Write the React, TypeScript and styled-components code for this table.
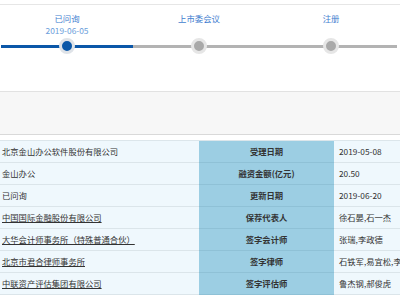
import React from "react";
import styled, { createGlobalStyle } from "styled-components";

const Global = createGlobalStyle`
  html, body { margin: 0; padding: 0; background: #ffffff; }
  body { font-family: "Noto Sans CJK SC", "Liberation Sans", sans-serif; overflow: hidden; }
`;

const Page = styled.div`
  width: 400px;
  height: 300px;
  overflow: hidden;
  background: #ffffff;
`;

const TopRule = styled.div`
  height: 4px;
  border-bottom: 1px solid #e6e6e6;
`;

const Steps = styled.div`
  display: flex;
  padding-left: 1px;
`;

const Step = styled.div`
  flex: 0 0 132px;
  display: flex;
  flex-direction: column;
  align-items: center;
`;

const StepLabel = styled.div`
  margin-top: 7px;
  height: 12px;
  line-height: 12px;
  font-size: 8.4px;
  color: #3f7ecf;
`;

const StepDate = styled.div`
  height: 12px;
  line-height: 12px;
  font-size: 8.4px;
  color: #6b9edb;
`;

const Track = styled.div<{ $done: boolean }>`
  align-self: stretch;
  margin-top: 2px;
  height: 16px;
  display: flex;
  align-items: center;
  justify-content: center;
  background: linear-gradient(${(p) => (p.$done ? "#0b57a8" : "#b3b3b3")}, ${(p) => (p.$done ? "#0b57a8" : "#b3b3b3")}) center / 100% 3px no-repeat;
`;

const Dot = styled.div<{ $done: boolean }>`
  width: 10px;
  height: 10px;
  border-radius: 50%;
  background: ${(p) => (p.$done ? "#0b57a8" : "#a9a9a9")};
  border: 3px solid ${(p) => (p.$done ? "#dfe3e8" : "#e6e6e6")};
`;

const Band = styled.div`
  margin-top: 37px;
  height: 42px;
  background: #f7f7f7;
  border-top: 1px solid #e2e2e2;
  border-bottom: 1px solid #d9d9d9;
`;

const Table = styled.div`
  margin-top: 5px;
  display: grid;
  grid-template-columns: 199px 135px 1fr;
  border-top: 1px solid #dce6eb;
`;

const Cell = styled.div<{ $kind: "value" | "label" | "data" }>`
  height: 21px;
  line-height: 21px;
  font-size: 8.3px;
  white-space: nowrap;
  overflow: hidden;
  color: #333333;
  border-bottom: 1px solid ${(p) => (p.$kind === "label" ? "#8fc1d6" : "#dbe5ea")};
  background: ${(p) => (p.$kind === "label" ? "#9ccee3" : "#eff8fd")};
  text-align: ${(p) => (p.$kind === "label" ? "center" : "left")};
  font-weight: ${(p) => (p.$kind === "label" ? 600 : 400)};
  padding-left: ${(p) => (p.$kind === "value" ? "2px" : p.$kind === "data" ? "5px" : "0")};
`;

const Link = styled.span`
  text-decoration: underline;
  color: #333333;
`;

const steps = [
  { label: "已问询", date: "2019-06-05", done: true },
  { label: "上市委会议", date: "", done: false },
  { label: "注册", date: "", done: false },
];

const rows: { value: string; link?: boolean; label: string; data: string }[] = [
  { value: "北京金山办公软件股份有限公司", label: "受理日期", data: "2019-05-08" },
  { value: "金山办公", label: "融资金额(亿元)", data: "20.50" },
  { value: "已问询", label: "更新日期", data: "2019-06-20" },
  { value: "中国国际金融股份有限公司", link: true, label: "保荐代表人", data: "徐石晏,石一杰" },
  { value: "大华会计师事务所（特殊普通合伙）", link: true, label: "签字会计师", data: "张瑞,李政德" },
  { value: "北京市君合律师事务所", link: true, label: "签字律师", data: "石铁军,易宜松,李若晨" },
  { value: "中联资产评估集团有限公司", link: true, label: "签字评估师", data: "鲁杰钢,郝俊虎" },
];

export default function App() {
  return (
    <Page>
      <Global />
      <TopRule />
      <Steps>
        {steps.map((s) => (
          <Step key={s.label}>
            <StepLabel>{s.label}</StepLabel>
            <StepDate>{s.date}</StepDate>
            <Track $done={s.done}>
              <Dot $done={s.done} />
            </Track>
          </Step>
        ))}
      </Steps>
      <Band />
      <Table>
        {rows.map((r) => (
          <React.Fragment key={r.label}>
            <Cell $kind="value">{r.link ? <Link>{r.value}</Link> : r.value}</Cell>
            <Cell $kind="label">{r.label}</Cell>
            <Cell $kind="data">{r.data}</Cell>
          </React.Fragment>
        ))}
      </Table>
    </Page>
  );
}
